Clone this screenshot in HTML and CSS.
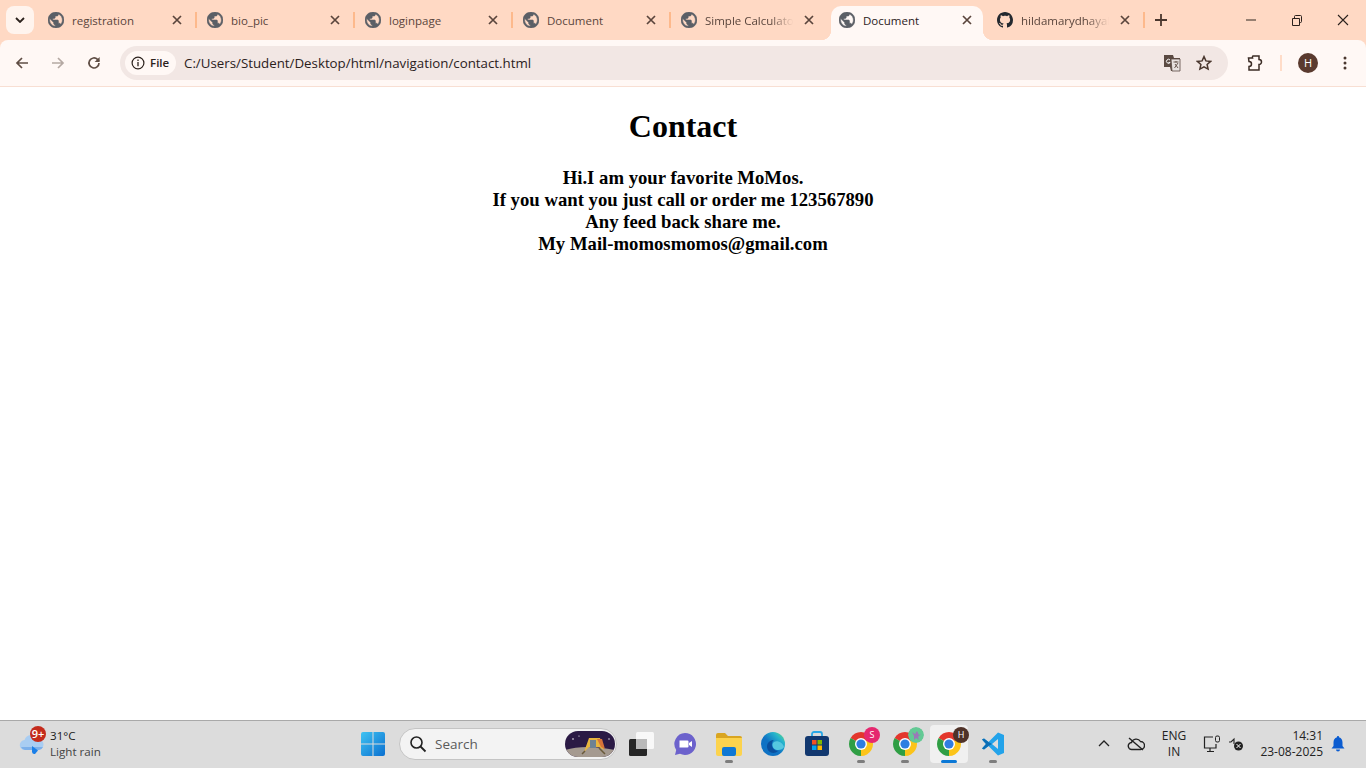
FILE: index.html
```html
<!DOCTYPE html>
<html lang="en">
<head>
  <meta charset="UTF-8" />
  <title>Document</title>
  <link rel="stylesheet" href="styles.css">
</head>
<body>
<svg class="defs" width="0" height="0">
  <symbol id="globe" viewBox="2 2 20 20">
    <path fill="#5b5f66" stroke="#5b5f66" stroke-width=".7" d="M12 2C6.48 2 2 6.48 2 12s4.48 10 10 10 10-4.48 10-10S17.52 2 12 2zm-1 17.93c-3.95-.49-7-3.85-7-7.93 0-.62.08-1.21.21-1.79L9 15v1c0 1.1.9 2 2 2v1.93zm6.9-2.54c-.26-.81-1-1.39-1.9-1.39h-1v-3c0-.55-.45-1-1-1H8v-2h2c.55 0 1-.45 1-1V7h2c1.1 0 2-.9 2-2v-.41c2.93 1.19 5 4.06 5 7.41 0 2.08-.8 3.97-2.1 5.39z"/>
  </symbol>
  <symbol id="close" viewBox="0 0 16 16">
    <path d="M4 4l8 8M12 4l-8 8" stroke="#5a453c" stroke-width="1.7" fill="none"/>
  </symbol>
  <symbol id="chrome" viewBox="0 0 24 24">
    <path fill="#e3362c" d="M12 12L22.39 6A12 12 0 0 0 1.61 6z"/>
    <path fill="#fcc419" d="M12 12L12 24A12 12 0 0 0 22.39 6z"/>
    <path fill="#2f9e44" d="M12 12L1.61 6A12 12 0 0 0 12 24z"/>
    <circle cx="12" cy="12" r="6" fill="#fff"/>
    <circle cx="12" cy="12" r="4.6" fill="#2f7de1"/>
  </symbol>
</svg>

<header class="tabstrip">
  <button class="tab-search">
    <svg width="10" height="6" viewBox="0 0 10 6"><path d="M1 1l4 4 4-4" stroke="#2b211c" stroke-width="1.8" fill="none"/></svg>
  </button>
  <div class="tab"><svg class="favicon"><use href="#globe"/></svg><span class="tab-title">registration</span><svg class="tab-close"><use href="#close"/></svg></div>
  <i class="tab-sep"></i>
  <div class="tab"><svg class="favicon"><use href="#globe"/></svg><span class="tab-title">bio_pic</span><svg class="tab-close"><use href="#close"/></svg></div>
  <i class="tab-sep"></i>
  <div class="tab"><svg class="favicon"><use href="#globe"/></svg><span class="tab-title">loginpage</span><svg class="tab-close"><use href="#close"/></svg></div>
  <i class="tab-sep"></i>
  <div class="tab"><svg class="favicon"><use href="#globe"/></svg><span class="tab-title">Document</span><svg class="tab-close"><use href="#close"/></svg></div>
  <i class="tab-sep"></i>
  <div class="tab"><svg class="favicon"><use href="#globe"/></svg><span class="tab-title fade">Simple Calculato</span><svg class="tab-close"><use href="#close"/></svg></div>
  <div class="tab active"><svg class="favicon"><use href="#globe"/></svg><span class="tab-title">Document</span><svg class="tab-close"><use href="#close"/></svg></div>
  <div class="tab">
    <svg class="favicon" viewBox="0 0 16 16"><path fill="#24292f" d="M8 0C3.58 0 0 3.58 0 8c0 3.54 2.29 6.53 5.47 7.59.4.07.55-.17.55-.38 0-.19-.01-.82-.01-1.49-2.01.37-2.53-.49-2.69-.94-.09-.23-.48-.94-.82-1.13-.28-.15-.68-.52-.01-.53.63-.01 1.08.58 1.23.82.72 1.21 1.87.87 2.33.66.07-.52.28-.87.51-1.07-1.78-.2-3.64-.89-3.64-3.95 0-.87.31-1.59.82-2.15-.08-.2-.36-1.02.08-2.12 0 0 .67-.21 2.2.82.64-.18 1.32-.27 2-.27.68 0 1.36.09 2 .27 1.53-1.04 2.2-.82 2.2-.82.44 1.1.16 1.92.08 2.12.51.56.82 1.27.82 2.15 0 3.07-1.87 3.75-3.65 3.95.29.25.54.73.54 1.48 0 1.07-.01 1.93-.01 2.2 0 .21.15.46.55.38A8.013 8.013 0 0016 8c0-4.42-3.58-8-8-8z"/></svg>
    <span class="tab-title fade">hildamarydhayal</span><svg class="tab-close"><use href="#close"/></svg>
  </div>
  <i class="tab-sep"></i>
  <svg class="new-tab" width="12" height="12" viewBox="0 0 12 12"><path d="M6 0v12M0 6h12" stroke="#4a372e" stroke-width="1.8"/></svg>
  <div class="win-controls">
    <svg width="46" height="16" viewBox="0 0 46 16"><path d="M18 8h10" stroke="#6b5a50" stroke-width="1.4"/></svg>
    <svg width="46" height="16" viewBox="0 0 46 16"><path d="M18.5 6.5h7v7h-7z M20.5 6.5V4.5a1 1 0 0 1 1-1h5a1 1 0 0 1 1 1v5a1 1 0 0 1-1 1h-1" stroke="#2b211c" fill="none"/></svg>
    <svg width="46" height="16" viewBox="0 0 46 16"><path d="M18 3l10 10M28 3L18 13" stroke="#2b211c" stroke-width="1.1"/></svg>
  </div>
</header>

<nav class="toolbar">
  <svg class="nav-icon" viewBox="0 0 16 16"><path d="M14 8H3M8 3L3 8l5 5" stroke="#5f4d44" stroke-width="1.7" fill="none"/></svg>
  <svg class="nav-icon" viewBox="0 0 16 16"><path d="M2 8h11M8 3l5 5-5 5" stroke="#b5a9a3" stroke-width="1.7" fill="none"/></svg>
  <svg class="nav-icon" viewBox="0 0 16 16"><path d="M13 8a5 5 0 1 1-1.5-3.6L13 6" stroke="#5f4d44" stroke-width="1.7" fill="none"/><path d="M13.6 2v5h-5z" fill="#5f4d44"/></svg>
  <div class="omnibox">
    <div class="chip">
      <svg width="14" height="14" viewBox="0 0 14 14"><circle cx="7" cy="7" r="5.9" fill="none" stroke="#2b211c" stroke-width="1.2"/><path d="M7 6v4.2M7 3.6v1.3" stroke="#2b211c" stroke-width="1.3"/></svg>
      <span>File</span>
    </div>
    <span class="url">C:/Users/Student/Desktop/html/navigation/contact.html</span>
    <svg class="translate" width="18" height="18" viewBox="0 0 18 18">
      <path d="M1 1h9l1 3h6v13H8l-1-4H1z" fill="#5b4a42"/>
      <path d="M8 5h9v12H9z" fill="#e8e2df" stroke="#5b4a42" stroke-width=".8"/>
      <path d="M7 6a2 2 0 1 0 .2 2.4H5.4" stroke="#fff" stroke-width="1" fill="none"/>
      <path d="M10.5 8h5M13 7v1.5M11.5 14l3.5-5M12 10l3 4" stroke="#5b4a42" stroke-width=".9" fill="none"/>
    </svg>
    <svg class="star" width="16" height="16" viewBox="0 0 16 16"><path d="M8 1.6l1.9 4.3 4.7.5-3.5 3.1 1 4.6L8 11.8l-4.1 2.3 1-4.6L1.400 6.400l4.700-.5z" fill="none" stroke="#4a372e" stroke-width="1.500"/></svg>
  </div>
  <svg class="ext" width="18" height="18" viewBox="0 0 18 18"><path d="M2 4h4a2 2 0 0 1 .4-2h6.100v3.500a2 2 0 0 1 0 5V16H2.500v-3.500a2 2 0 0 0 0-5z" transform="translate(1.500 0)" fill="none" stroke="#3c2d26" stroke-width="1.500"/></svg>
  <i class="toolbar-sep"></i>
  <span class="avatar">H</span>
  <svg class="menu" width="4" height="14" viewBox="0 0 4 14"><circle cx="2" cy="2" r="1.500" fill="#4a372e"/><circle cx="2" cy="7" r="1.500" fill="#4a372e"/><circle cx="2" cy="12" r="1.500" fill="#4a372e"/></svg>
</nav>

<main class="page">
  <h1>Contact</h1>
  <p class="contact-text">Hi.I am your favorite MoMos.<br>If you want you just call or order me 123567890<br>Any feed back share me.<br>My Mail-momosmomos@gmail.com</p>
</main>

<footer class="taskbar">
  <div class="weather">
    <svg class="weather-icon" width="28" height="24" viewBox="0 0 28 24">
      <path d="M7 18a5 5 0 0 1-.5-10 7 7 0 0 1 13-1 5.500 5.500 0 0 1 1 11z" fill="#a9cdf2"/>
      <path d="M3 15h22a5 5 0 0 1-4 3H7a5 5 0 0 1-4-3z" fill="#7db0ea"/>
      <path d="M14 14l6 4.500-3 3.500a2.500 2.500 0 0 1-3-2z" fill="#1b7fe8"/>
    </svg>
    <span class="weather-badge">9+</span>
    <div class="weather-text"><span class="temp">31°C</span><span class="cond">Light rain</span></div>
  </div>

  <div class="apps">
    <div class="app start">
      <svg width="24" height="24" viewBox="0 0 24 24">
        <defs><linearGradient id="win" x1="0" y1="0" x2="1" y2="1"><stop offset="0" stop-color="#3fc3f2"/><stop offset="1" stop-color="#0a6fd0"/></linearGradient></defs>
        <path fill="url(#win)" d="M0 2a2 2 0 0 1 2-2h9.500v11.500H0zM12.500 0H22a2 2 0 0 1 2 2v9.500H12.500zM0 12.500h11.500V24H2a2 2 0 0 1-2-2zM12.500 12.500H24V22a2 2 0 0 1-2 2h-9.500z"/>
      </svg>
    </div>
    <div class="searchbox">
      <svg width="18" height="18" viewBox="0 0 18 18"><circle cx="7.500" cy="7.500" r="5.500" fill="none" stroke="#222" stroke-width="1.600"/><path d="M11.500 11.500L16.500 16.500" stroke="#222" stroke-width="1.800"/></svg>
      <span>Search</span>
      <svg class="search-art" width="50" height="26" viewBox="0 0 50 26">
        <defs><clipPath id="pill"><rect width="50" height="26" rx="13"/></clipPath></defs>
        <g clip-path="url(#pill)">
          <rect width="50" height="26" fill="#2b1a45"/>
          <path d="M0 19q20-6 50 0v7H0z" fill="#a59a90"/>
          <path d="M19 21l5-14h11l4 12-5-3H24z" fill="#e8b53e"/>
          <rect x="25" y="9" width="6" height="8" fill="#6d8293"/>
          <path d="M32 8h5l3 10-4-2z" fill="#d7743a"/>
          <path d="M34 17l6 6M20 20l-3 3" stroke="#6a5a3a" stroke-width="1.500"/>
          <circle cx="8" cy="8" r=".8" fill="#fff"/><circle cx="14" cy="5" r=".6" fill="#fff"/><circle cx="44" cy="8" r=".7" fill="#fff"/>
        </g>
      </svg>
    </div>
    <div class="app taskview">
      <svg width="26" height="24" viewBox="0 0 26 24">
        <rect x="7" y="0" width="18" height="17" rx="1.500" fill="#f8f8f8"/>
        <rect x="0" y="7" width="18" height="17" rx="1.500" fill="#262626"/>
        <rect x="7" y="7" width="11" height="10" fill="#b9b9b9"/>
      </svg>
    </div>
    <div class="app">
      <svg width="24" height="24" viewBox="0 0 24 24"><path d="M12 1a11 11 0 1 1-5 20.800L2 23l1.200-5A11 11 0 0 1 12 1z" fill="#6c62cc"/><path d="M6.500 8.500h8a1 1 0 0 1 1 1v5a1 1 0 0 1-1 1h-8zM16 11l3-2v6l-3-2z" fill="#fff"/></svg>
    </div>
    <div class="app running">
      <svg width="26" height="24" viewBox="0 0 26 24"><path d="M0 3a2 2 0 0 1 2-2h7l3 3h12a2 2 0 0 1 2 2v4H0z" fill="#d9a521"/><path d="M0 6h26v16a2 2 0 0 1-2 2H2a2 2 0 0 1-2-2z" fill="#fcd34d"/><rect x="6" y="15" width="14" height="9" rx="2" fill="#0f78d4"/></svg>
    </div>
    <div class="app">
      <svg width="24" height="24" viewBox="0 0 24 24">
        <defs><linearGradient id="edge" x1="0" y1="1" x2="1" y2="0"><stop offset=".45" stop-color="#0f72c4"/><stop offset=".75" stop-color="#27b5cc"/><stop offset="1" stop-color="#6fe06c"/></linearGradient></defs>
        <circle cx="12" cy="12" r="12" fill="url(#edge)"/>
        <path d="M23 15c-1 2-4 3.500-7 3-3-.5-5-3-4.500-6 .5-2 3-3.500 6-2.500 2.500.5 5 3 5.500 5.500z" fill="#55c8e0"/>
        <path d="M11 11c-1 4 2 8 6 8-2 2-5 2.500-7 1.500C6 19 5 14 7 11c1-1.500 3-3 6-3-1 .5-1.700 1.700-2 3z" fill="#0a4f9e"/>
      </svg>
    </div>
    <div class="app">
      <svg width="24" height="26" viewBox="0 0 24 26"><path d="M7 6V3a2 2 0 0 1 2-2h6a2 2 0 0 1 2 2v3" fill="none" stroke="#29a7e6" stroke-width="1.800"/><rect y="5" width="24" height="20" rx="3" fill="#12386f"/><rect x="7" y="9" width="4.500" height="4.500" fill="#f25022"/><rect x="12.500" y="9" width="4.500" height="4.500" fill="#7fba00"/><rect x="7" y="14.500" width="4.500" height="4.500" fill="#00a4ef"/><rect x="12.500" y="14.500" width="4.500" height="4.500" fill="#ffb900"/></svg>
    </div>
    <div class="app running">
      <svg class="chrome-icon"><use href="#chrome"/></svg>
      <span class="profile pink">S</span>
    </div>
    <div class="app running">
      <svg class="chrome-icon"><use href="#chrome"/></svg>
      <svg class="profile art" viewBox="0 0 16 16"><circle cx="8" cy="8" r="8" fill="#63c994"/><path d="M4 5l3 2 2-3 2 4 2-1-3 3 1 3-3-2-2 2v-4z" fill="#9a78b8"/></svg>
    </div>
    <div class="app running active">
      <svg class="chrome-icon"><use href="#chrome"/></svg>
      <span class="profile brown">H</span>
    </div>
    <div class="app running">
      <svg width="24" height="24" viewBox="0 0 24 24"><path fill="#23a3ea" fill-rule="evenodd" d="M17 .5L7.500 10 3 6.500 1 7.500 5 12l-4 4.500 2 1L7.500 14l9.500 9.500 6-2.500V3zM17 7l-6 5 6 5z"/><path fill="#0b6db5" d="M7.500 10L3 6.500 1 7.500 5 12l-4 4.500 2 1L7.500 14 11 12z"/></svg>
    </div>
  </div>

  <div class="tray">
    <svg class="tray-chevron" width="12" height="7" viewBox="0 0 12 7"><path d="M1 6l5-5 5 5" stroke="#222" stroke-width="1.300" fill="none"/></svg>
    <svg class="tray-cloud" width="18" height="14" viewBox="0 0 18 14"><path d="M5 12.500a3.500 3.500 0 0 1-.5-7A5 5 0 0 1 13.500 4.500a3.800 3.800 0 0 1 0 8z" fill="none" stroke="#222" stroke-width="1.400"/><path d="M2 1l14 12" stroke="#222" stroke-width="1.400"/></svg>
    <div class="lang"><span>ENG</span><span>IN</span></div>
    <svg class="tray-net" width="18" height="18" viewBox="0 0 18 18"><path d="M10 2H1.500v11H13V9M7 13v3M4 16.500h7" fill="none" stroke="#222" stroke-width="1.200"/><rect x="12.500" y="1" width="4" height="6" rx="1.500" fill="none" stroke="#222"/></svg>
    <svg class="tray-sound" width="16" height="14" viewBox="0 0 16 14"><path d="M1 5h2l3-3v5" fill="none" stroke="#222" stroke-width="1.100"/><circle cx="10.500" cy="9" r="4.500" fill="#222"/><path d="M8.500 7l4 4M12.500 7l-4 4" stroke="#fff"/></svg>
    <div class="clock"><span>14:31</span><span>23-08-2025</span></div>
    <svg class="bell" width="14" height="16" viewBox="0 0 14 16"><path d="M7 0a1 1 0 0 1 1 1.200C10.500 2 11.500 4 11.500 6.500V10l2 2.500H.5L2.500 10V6.500C2.500 4 3.500 2 6 1.200A1 1 0 0 1 7 0zM5 13.500h4a2 2 0 0 1-4 0z" fill="#0b5cd0"/></svg>
  </div>
</footer>
</body>
</html>
```

FILE: styles.css
```css
* {
  box-sizing: border-box;
}

body {
  margin: 0;
  height: 768px;
  overflow: hidden;
  display: flex;
  flex-direction: column;
  background: #ffd9c4;
  font-family: "Open Sans", "Noto Sans", sans-serif;
  color: #2b211c;
}

.defs {
  position: absolute;
}

/* tab strip */
.tabstrip {
  height: 40px;
  flex: none;
  display: flex;
  align-items: center;
  padding-left: 6px;
}

.tab-search {
  width: 28px;
  height: 28px;
  margin-right: 5px;
  padding: 0;
  border: none;
  border-radius: 8px;
  background: #fff4ee;
  display: flex;
  align-items: center;
  justify-content: center;
}

.tab {
  width: 156px;
  height: 34px;
  margin-top: 6px;
  display: flex;
  align-items: center;
  padding: 0 10px 6px 10px;
  font-size: 11.5px;
  color: #5a453c;
  position: relative;
}

.tab-search + .tab {
  padding-left: 9px;
}

.tab.active {
  width: 152px;
  height: 34px;
  margin: 6px 4px 0 4px;
  padding: 0 8px 6px 8px;
  background: #fff8f5;
  border-radius: 10px 10px 0 0;
  color: #2b211c;
}

.tab.active::before,
.tab.active::after {
  content: "";
  position: absolute;
  bottom: 0;
  width: 10px;
  height: 10px;
}

.tab.active::before {
  left: -10px;
  background: radial-gradient(circle at 0 0, transparent 10px, #fff8f5 10.5px);
}

.tab.active::after {
  right: -10px;
  background: radial-gradient(circle at 100% 0, transparent 10px, #fff8f5 10.5px);
}

.favicon {
  width: 16px;
  height: 16px;
  flex: none;
}

.tab-title {
  flex: 1;
  min-width: 0;
  margin-left: 8px;
  white-space: nowrap;
  overflow: hidden;
}

.tab-title.fade {
  -webkit-mask-image: linear-gradient(to right, #000 68%, transparent 92%);
  mask-image: linear-gradient(to right, #000 68%, transparent 92%);
}

.tab-close {
  width: 16px;
  height: 16px;
  flex: none;
}

.tab-sep {
  width: 2px;
  height: 16px;
  background: #fdb98c;
  flex: none;
}

.new-tab {
  margin-left: 10px;
}

.win-controls {
  margin-left: auto;
  margin-right: 0;
  display: flex;
}

/* toolbar */
.toolbar {
  height: 47px;
  flex: none;
  display: flex;
  align-items: center;
  padding: 0 0 1px 14px;
  background: #fff8f5;
  border-bottom: 1px solid #f8dfd3;
  border-radius: 8px 8px 0 0;
}

.nav-icon {
  width: 16px;
  height: 16px;
  margin-right: 20px;
  flex: none;
}

.omnibox {
  width: 1108px;
  height: 34px;
  margin-left: -2px;
  display: flex;
  align-items: center;
  padding: 0 16px 0 5px;
  background: #f2e7e4;
  border-radius: 17px;
}

.chip {
  width: 51px;
  height: 24px;
  display: flex;
  align-items: center;
  padding-left: 6px;
  gap: 5px;
  background: #fff8f5;
  border-radius: 12px;
  font-size: 11.5px;
  font-weight: 600;
}

.url {
  margin-left: 8px;
  font-size: 13.3px;
  flex: 1;
}

.star {
  margin-left: 15px;
}

.ext {
  margin-left: 17px;
}

.toolbar-sep {
  width: 2px;
  height: 16px;
  margin-left: 17px;
  background: #ffdcc8;
}

.avatar {
  width: 20px;
  height: 20px;
  margin-left: 16px;
  border-radius: 50%;
  background: #5a3a2e;
  color: #fff;
  font-size: 11px;
  display: flex;
  align-items: center;
  justify-content: center;
}

.menu {
  margin-left: 25px;
}

/* page */
.page {
  flex: 1;
  min-height: 0;
  background: #fff;
  padding: 0 8px;
  text-align: center;
  font-family: "Liberation Serif", serif;
  color: #000;
  overflow: hidden;
}

.page h1 {
  margin: 21px 0 0;
  font-size: 32px;
}

.contact-text {
  margin: 22px 0 0;
  font-size: 18.72px;
  line-height: 22px;
  font-weight: bold;
}

/* taskbar */
.taskbar {
  height: 48px;
  flex: none;
  display: flex;
  align-items: center;
  padding-bottom: 2px;
  background: #dcdcdc;
  border-top: 1px solid #a9a9a9;
  position: relative;
}

.weather {
  width: 353px;
  flex: none;
  display: flex;
  align-items: center;
  padding-left: 18px;
  position: relative;
}

.weather-badge {
  position: absolute;
  left: 30px;
  top: -2px;
  width: 16px;
  height: 16px;
  border-radius: 50%;
  background: #c42b1c;
  color: #fff;
  font-size: 11px;
  font-weight: 600;
  display: flex;
  align-items: center;
  justify-content: center;
}

.weather-text {
  display: flex;
  flex-direction: column;
  margin-left: 4px;
  font-size: 11.6px;
  line-height: 16px;
}

.temp {
  color: #1a1a1a;
}

.cond {
  color: #444;
}

.apps {
  display: flex;
  align-items: center;
}

.app {
  width: 40px;
  height: 38px;
  margin-right: 4px;
  border-radius: 4px;
  display: flex;
  align-items: center;
  justify-content: center;
  position: relative;
}

.app.active {
  background: #f0f0f0;
  width: 38px;
  margin: 0 5px 0 1px;
}

.app.running::after {
  content: "";
  position: absolute;
  bottom: 0;
  left: 16px;
  width: 8px;
  height: 3px;
  border-radius: 2px;
  background: #7d7d7d;
}

.app.active::after {
  left: 11px;
  width: 16px;
  background: #0b78d6;
}

.chrome-icon {
  width: 24px;
  height: 24px;
}

.profile {
  position: absolute;
  top: 2px;
  left: 23px;
  width: 16px;
  height: 16px;
  border-radius: 50%;
  color: #fff;
  font-size: 9px;
  display: flex;
  align-items: center;
  justify-content: center;
}

.profile.pink {
  background: #e5286f;
}

.profile.brown {
  background: #4f3228;
}

.searchbox {
  width: 218px;
  height: 32px;
  margin: 0 4px 0 2px;
  display: flex;
  align-items: center;
  padding: 0 1px 0 9px;
  background: #f3f3f3;
  border: 1px solid #c4c4c4;
  border-radius: 16px;
  font-size: 13.5px;
  color: #5a5a5a;
}

.searchbox span {
  margin-left: 8px;
  flex: 1;
}

.taskview {
  left: 1px;
}

.tray {
  margin-left: auto;
  display: flex;
  align-items: center;
  padding-right: 21px;
  position: relative;
}

.tray-cloud {
  margin-left: 17px;
}

.lang {
  width: 36px;
  margin-left: 11px;
  display: flex;
  flex-direction: column;
  align-items: center;
  font-size: 12px;
  line-height: 16px;
  color: #222;
}

.tray-net {
  margin-left: 11px;
}

.tray-sound {
  margin-left: 7px;
}

.clock {
  width: 79px;
  display: flex;
  flex-direction: column;
  align-items: flex-end;
  font-size: 12px;
  line-height: 16px;
  color: #222;
}

.bell {
  margin-left: 8px;
}
```
